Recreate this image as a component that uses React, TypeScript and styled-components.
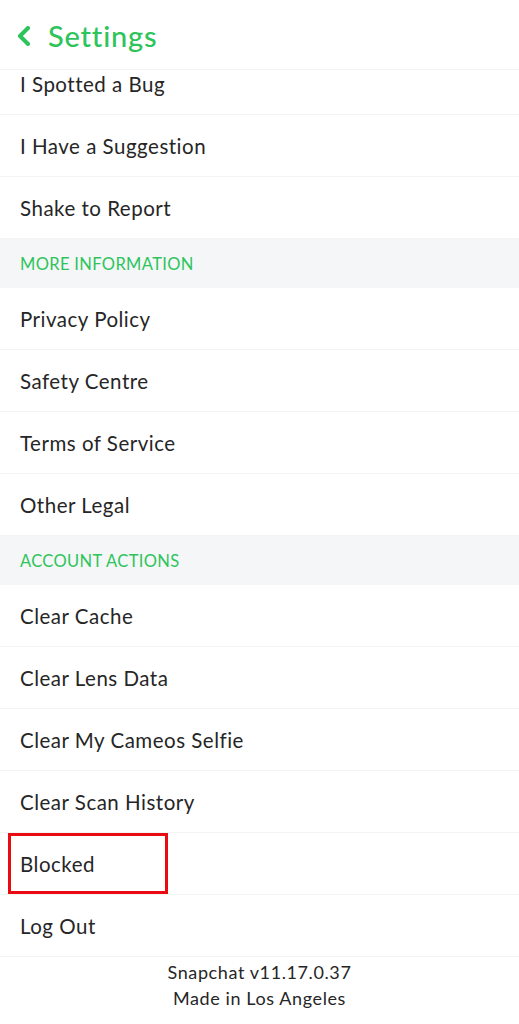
import styled, { createGlobalStyle } from "styled-components";

const GlobalStyle = createGlobalStyle`
  html, body {
    margin: 0;
    padding: 0;
    background: #ffffff;
  }
  body {
    font-family: "Lato", "Noto Sans", "Liberation Sans", sans-serif;
    -webkit-font-smoothing: antialiased;
  }
`;

const GREEN = "#2ec45c";

const Page = styled.div`
  width: 519px;
  height: 1024px;
  overflow: hidden;
  display: flex;
  flex-direction: column;
  background: #ffffff;
`;

const Header = styled.div`
  height: 70px;
  flex-shrink: 0;
  display: flex;
  align-items: center;
  gap: 17px;
  padding: 2px 0 0 17px;
  border-bottom: 1.5px solid #f4f4f4;
  box-sizing: border-box;
  position: relative;
  z-index: 1;
  background: #ffffff;
`;

const Title = styled.div`
  color: ${GREEN};
  font-size: 29px;
  font-weight: 500;
  letter-spacing: 0.8px;
`;

const Scroll = styled.div`
  flex: 1;
  overflow: hidden;
`;

const List = styled.div`
  display: flex;
  flex-direction: column;
  margin-top: -17px;
`;

const Row = styled.div`
  height: 62px;
  flex-shrink: 0;
  display: flex;
  align-items: center;
  padding-left: 20px;
  box-sizing: border-box;
  border-bottom: 1.5px solid #f4f4f4;
  font-size: 20.5px;
  letter-spacing: 0.5px;
  color: #262626;
  position: relative;
`;

const Section = styled.div`
  height: 49px;
  flex-shrink: 0;
  display: flex;
  align-items: center;
  padding-left: 20px;
  background: #f5f6f8;
  color: ${GREEN};
  font-size: 16.5px;
  letter-spacing: 0.35px;
`;

const Highlight = styled.div`
  position: absolute;
  left: 8px;
  top: 0px;
  width: 160px;
  height: 61px;
  border: 3px solid #ea0a12;
  box-sizing: border-box;
`;

const Footer = styled.div`
  display: flex;
  flex-direction: column;
  align-items: center;
  padding-top: 2px;
  font-size: 18px;
  letter-spacing: 0.6px;
  line-height: 26px;
  color: #262626;
`;

const Chevron = () => (
  <svg width="14" height="20" viewBox="0 0 14 20">
    <path
      d="M11 2 L3 10 L11 18"
      fill="none"
      stroke={GREEN}
      strokeWidth="4"
      strokeLinecap="round"
      strokeLinejoin="round"
    />
  </svg>
);

const sections: { title?: string; rows: string[] }[] = [
  { rows: ["I Spotted a Bug", "I Have a Suggestion", "Shake to Report"] },
  {
    title: "MORE INFORMATION",
    rows: ["Privacy Policy", "Safety Centre", "Terms of Service", "Other Legal"],
  },
  {
    title: "ACCOUNT ACTIONS",
    rows: [
      "Clear Cache",
      "Clear Lens Data",
      "Clear My Cameos Selfie",
      "Clear Scan History",
      "Blocked",
      "Log Out",
    ],
  },
];

const App = () => {
  return (
    <Page>
      <GlobalStyle />
      <Header>
        <Chevron />
        <Title>Settings</Title>
      </Header>
      <Scroll>
        <List>
          {sections.map((s, i) => (
            <div key={i} style={{ display: "contents" }}>
              {s.title && <Section>{s.title}</Section>}
              {s.rows.map((r) => (
                <Row key={r}>
                  {r}
                  {r === "Blocked" && <Highlight />}
                </Row>
              ))}
            </div>
          ))}
          <Footer>
            <span>Snapchat v11.17.0.37</span>
            <span>Made in Los Angeles</span>
          </Footer>
        </List>
      </Scroll>
    </Page>
  );
};

export default App;
